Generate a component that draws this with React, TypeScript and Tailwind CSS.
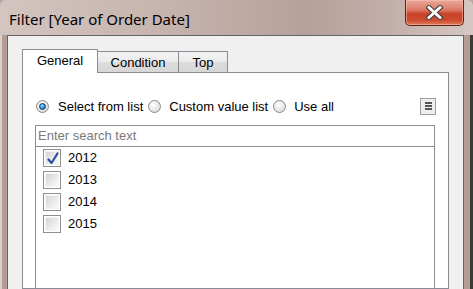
import React from "react";

function Radio({ checked }: { checked?: boolean }) {
  return (
    <div className="relative w-[13px] h-[13px] rounded-full border border-[#8a8a8a] bg-[radial-gradient(circle_at_40%_35%,#ffffff_0%,#e6e6e6_55%,#cfcfcf_100%)] flex items-center justify-center shrink-0">
      {checked && (
        <div className="w-[7px] h-[7px] rounded-full border border-[#0f3f73] bg-[radial-gradient(circle_at_40%_35%,#bfe6ff_0%,#3a95d8_45%,#16558f_100%)]" />
      )}
    </div>
  );
}

function Checkbox({ checked }: { checked?: boolean }) {
  return (
    <div className="relative w-[18px] h-[18px] border border-[#8e8f8f] bg-white p-px shrink-0">
      <div className="w-full h-full border border-[#f4f4f4] bg-[linear-gradient(135deg,#d5d5d5_0%,#ececec_60%,#f8f8f8_100%)]" />
      {checked && (
        <svg className="absolute left-[3px] top-[2px]" width="12" height="13" viewBox="0 0 12 13">
          <path d="M1.5 7.5 L4.5 11 L10.5 1.5" fill="none" stroke="#2b4fa3" strokeWidth="2.2" strokeLinecap="round" strokeLinejoin="round" />
        </svg>
      )}
    </div>
  );
}

export default function App() {
  const years = ["2012", "2013", "2014", "2015"];
  return (
    <div
      className="w-[473px] h-[289px] overflow-hidden flex flex-col bg-[#bba59f]"
      style={{ fontFamily: '"Liberation Sans", Arial, sans-serif' }}
    >
      {/* Title bar */}
      <div className="h-[35px] shrink-0 flex items-start bg-[linear-gradient(to_right,#d3c5c1_0%,#c6b3ad_35%,#b7a09a_65%,#c2aea9_82%,#d4c7c3_100%)] rounded-tl-[6px] rounded-tr-[6px]">
        <div
          className="pl-[9px] pt-[9px] text-[15px] text-black leading-[20px] flex-1"
          style={{ fontFamily: '"Noto Sans", "Open Sans", sans-serif' }}
        >
          Filter [Year of Order Date]
        </div>
        <div className="mr-[9px] w-[59px] h-[26px] rounded-b-[5px] border border-t-0 border-[#5b2418] bg-[linear-gradient(to_bottom,#e9a99c_0%,#dc7a66_40%,#c8432a_55%,#cc4a30_80%,#e07a5c_100%)] flex items-center justify-center shadow-[inset_0_0_0_1px_rgba(255,200,190,0.5)]">
          <svg width="17" height="15" viewBox="0 0 17 15">
            <path d="M3 2.5 L14 12.5 M14 2.5 L3 12.5" stroke="#3a3a3a" strokeWidth="5" strokeLinecap="square" />
            <path d="M3 2.5 L14 12.5 M14 2.5 L3 12.5" stroke="#ffffff" strokeWidth="3" strokeLinecap="square" />
          </svg>
        </div>
      </div>

      {/* Body row */}
      <div className="flex-1 flex min-h-0">
        {/* left frame */}
        <div className="w-[7px] shrink-0 flex">
          <div className="w-[2px] bg-[#d9cfcc]" />
          <div className="flex-1 bg-[#b39c94]" />
        </div>

        {/* client */}
        <div className="flex-1 border-l border-t border-r border-[#646464] bg-[#f0f0f0] flex flex-col px-[14px] pt-[13px] min-w-0">
          {/* tabs */}
          <div className="flex items-end -mb-px relative z-10 text-[13px] text-black">
            <div className="w-[76px] h-[24px] border-l border-t border-r border-[#898c95] bg-white flex items-center justify-center pb-px relative z-10">
              General
            </div>
            <div className="-ml-px w-[82px] h-[22px] border border-[#898c95] bg-[linear-gradient(to_bottom,#f3f3f3_0%,#ebebeb_50%,#dddddd_51%,#d6d6d6_100%)] flex items-center justify-center pt-px">
              Condition
            </div>
            <div className="-ml-px w-[50px] h-[22px] border border-[#898c95] bg-[linear-gradient(to_bottom,#f3f3f3_0%,#ebebeb_50%,#dddddd_51%,#d6d6d6_100%)] flex items-center justify-center pt-px">
              Top
            </div>
          </div>

          {/* panel */}
          <div className="flex-1 border border-[#898c95] bg-white flex flex-col px-[12px] pt-[25px] text-[13px] text-black">
            <div className="flex items-center h-[17px]">
              <div className="pl-px flex items-center">
                <Radio checked />
                <span className="ml-[9px]">Select from list</span>
              </div>
              <div className="ml-[5px] flex items-center">
                <Radio />
                <span className="ml-[8px]">Custom value list</span>
              </div>
              <div className="ml-[5px] flex items-center">
                <Radio />
                <span className="ml-[8px]">Use all</span>
              </div>
              <div className="ml-auto -mt-px w-[16px] h-[17px] border border-[#a0a0a0] bg-[#eeeeee] flex flex-col items-center justify-center gap-px">
                <div className="w-[7px] h-[2px] bg-[#555555]" />
                <div className="w-[7px] h-[2px] bg-[#555555]" />
                <div className="w-[7px] h-[2px] bg-[#555555]" />
              </div>
            </div>

            {/* list box */}
            <div className="mt-[10px] mr-px flex-1 border-l border-t border-r border-[#8d8d8d] flex flex-col">
              <div className="h-[21px] border-b border-[#8d8d8d] flex items-center pl-[2px] text-[#7a7a7a]">
                Enter search text
              </div>
              <div className="flex flex-col">
                {years.map((y, i) => (
                  <div key={y} className="h-[22px] flex items-center pl-[7px]">
                    <Checkbox checked={i === 0} />
                    <span className="ml-[7px]">{y}</span>
                  </div>
                ))}
              </div>
            </div>
          </div>
        </div>

        {/* right frame */}
        <div className="w-[9px] shrink-0 flex">
          <div className="w-[6px] bg-[#b39c94]" />
          <div className="flex-1 bg-[#3a3a3a]" />
        </div>
      </div>
    </div>
  );
}
